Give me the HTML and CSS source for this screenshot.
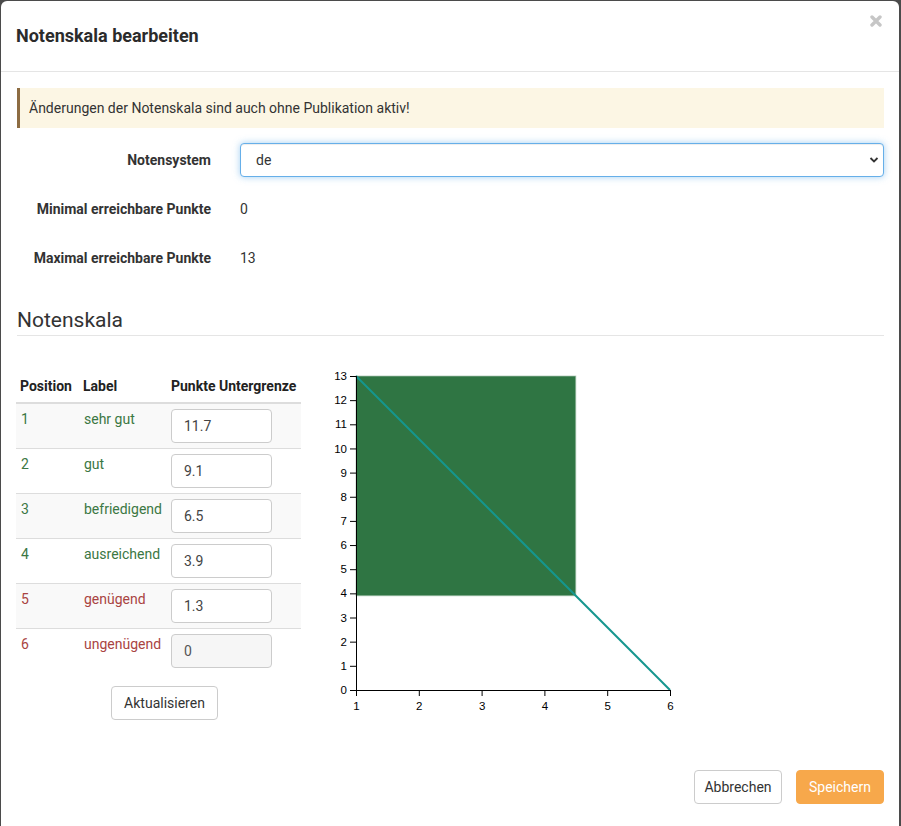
FILE: index.html
```html
<!DOCTYPE html>
<html lang="de">
<head>
<meta charset="utf-8">
<title>Notenskala bearbeiten</title>
<link rel="stylesheet" href="styles.css">
</head>
<body>
<div class="modal">
  <div class="modal-header">
    <h4 class="modal-title">Notenskala bearbeiten</h4>
    <span class="close" aria-label="Schließen">
      <svg width="12" height="12" viewBox="0 0 12 12"><path d="M2 2 L10 10 M10 2 L2 10" stroke="#c6c6c6" stroke-width="3.4" stroke-linecap="round"/></svg>
    </span>
  </div>
  <div class="modal-body">
    <div class="alert">Änderungen der Notenskala sind auch ohne Publikation aktiv!</div>
    <div class="form-row">
      <label class="form-label">Notensystem</label>
      <div class="select-wrap">
        <select class="form-select"><option>de</option></select>
        <svg class="chevron" width="10" height="8" viewBox="0 0 10 8"><path d="M1.5 2 L5 5.5 L8.5 2" fill="none" stroke="#333" stroke-width="1.8"/></svg>
      </div>
    </div>
    <div class="form-row">
      <label class="form-label">Minimal erreichbare Punkte</label>
      <div class="static">0</div>
    </div>
    <div class="form-row">
      <label class="form-label">Maximal erreichbare Punkte</label>
      <div class="static">13</div>
    </div>
    <h3 class="section-title">Notenskala</h3>
    <div class="scale">
      <div class="scale-left">
        <table class="grades">
          <thead>
            <tr><th class="c-pos">Position</th><th class="c-label">Label</th><th class="c-pts">Punkte Untergrenze</th></tr>
          </thead>
          <tbody>
            <tr class="pass"><td>1</td><td>sehr gut</td><td><input class="num" value="11.7"></td></tr>
            <tr class="pass"><td>2</td><td>gut</td><td><input class="num" value="9.1"></td></tr>
            <tr class="pass"><td>3</td><td>befriedigend</td><td><input class="num" value="6.5"></td></tr>
            <tr class="pass"><td>4</td><td>ausreichend</td><td><input class="num" value="3.9"></td></tr>
            <tr class="fail"><td>5</td><td>genügend</td><td><input class="num" value="1.3"></td></tr>
            <tr class="fail"><td>6</td><td>ungenügend</td><td><input class="num readonly" value="0" readonly></td></tr>
          </tbody>
        </table>
        <div class="update-row"><button class="btn">Aktualisieren</button></div>
      </div>
      <svg class="chart" width="380" height="350" viewBox="0 0 380 350">
        <rect x="36" y="8" width="219.8" height="219.8" fill="#2f7543" stroke="#a9c5b0" stroke-width="1" stroke-opacity="0.7"/>
        <polyline points="36,8 255.8,227.8 350,322" fill="none" stroke="#15968f" stroke-width="2"/>
        <g stroke="#000" stroke-width="1" fill="none">
          <path d="M36.5 8 V322.5 H350.5"/>
          <path d="M30 8.5 H36 M30 32.65 H36 M30 56.8 H36 M30 80.95 H36 M30 105.1 H36 M30 129.25 H36 M30 153.4 H36 M30 177.55 H36 M30 201.7 H36 M30 225.85 H36 M30 250 H36 M30 274.15 H36 M30 298.3 H36 M30 322.5 H36"/>
          <path d="M36.5 322 V328 M99.3 322 V328 M162.1 322 V328 M224.9 322 V328 M287.7 322 V328 M350.5 322 V328"/>
        </g>
        <g class="ylab" text-anchor="end">
          <text x="27" y="12">13</text>
          <text x="27" y="36.2">12</text>
          <text x="27" y="60.3">11</text>
          <text x="27" y="84.5">10</text>
          <text x="27" y="108.6">9</text>
          <text x="27" y="132.8">8</text>
          <text x="27" y="156.9">7</text>
          <text x="27" y="181.1">6</text>
          <text x="27" y="205.2">5</text>
          <text x="27" y="229.4">4</text>
          <text x="27" y="253.5">3</text>
          <text x="27" y="277.7">2</text>
          <text x="27" y="301.8">1</text>
          <text x="27" y="326">0</text>
        </g>
        <g class="xlab" text-anchor="middle">
          <text x="36.5" y="342">1</text>
          <text x="99.3" y="342">2</text>
          <text x="162.1" y="342">3</text>
          <text x="224.9" y="342">4</text>
          <text x="287.7" y="342">5</text>
          <text x="350.5" y="342">6</text>
        </g>
      </svg>
    </div>
  </div>
  <div class="modal-footer">
    <button class="btn btn-default">Abbrechen</button>
    <button class="btn btn-primary">Speichern</button>
  </div>
</div>
</body>
</html>
```
FILE: styles.css
```css
* { box-sizing: border-box; }
html, body { margin: 0; padding: 0; }
body {
  background: #4b4b4b;
  font-family: Roboto, "Liberation Sans", Arial, sans-serif;
  font-size: 14px;
  color: #333;
  height: 826px;
  overflow: hidden;
}
.modal {
  margin: 1px 0 0 1px;
  width: 898px;
  height: 830px;
  background: #fff;
  border-radius: 6px;
  position: relative;
}
.modal-header {
  height: 71px;
  padding: 0 16px 2px 15px;
  border-bottom: 1px solid #e5e5e5;
  display: flex;
  align-items: center;
}
.modal-title {
  margin: 0;
  font-size: 18px;
  font-weight: 700;
  color: #2b2b2b;
}
.close {
  position: absolute;
  right: 17px;
  top: 14px;
  width: 12px;
  height: 12px;
  display: block;
}
.close svg { display: block; }
.modal-body {
  padding: 16px 15px 16px 15px;
}
.alert {
  background: #fcf6e4;
  border-left: 3px solid #8d6c42;
  padding: 10px 9px;
  line-height: 20px;
  font-size: 14px;
  color: #333;
  margin-bottom: 15px;
  margin-left: 1px;
}
.form-row {
  display: grid;
  grid-template-columns: 210px 1fr;
  column-gap: 14px;
  margin-bottom: 15px;
  align-items: start;
}
.form-label {
  text-align: right;
  font-weight: 700;
  line-height: 20px;
  padding: 7px 15px 7px 0;
  color: #333;
}
.select-wrap { position: relative; }
.form-select {
  width: 100%;
  height: 34px;
  -webkit-appearance: none;
  appearance: none;
  border: 1px solid #66afe9;
  border-radius: 4px;
  box-shadow: inset 0 1px 1px rgba(0,0,0,.075), 0 0 7px rgba(102,175,233,.6);
  background: #fff;
  font-family: inherit;
  font-size: 14px;
  color: #333;
  padding: 0 15px;
  outline: none;
}
.chevron {
  position: absolute;
  right: 5px;
  top: 13px;
  pointer-events: none;
}
.static {
  line-height: 20px;
  padding: 7px 0;
  color: #333;
}
.section-title {
  margin: 32px 0 0 1px;
  font-size: 21px;
  font-weight: 400;
  color: #333;
  line-height: 26px;
  padding-bottom: 2px;
  border-bottom: 1px solid #e5e5e5;
}
.scale {
  display: flex;
  align-items: flex-start;
  margin-top: 32px;
}
.scale-left { width: 285px; }
.grades {
  width: 285px;
  border-collapse: collapse;
  font-size: 14px;
}
.grades th {
  font-weight: 700;
  font-size: 14px;
  text-align: left;
  padding: 8px 4px 6px 4px;
  line-height: 20px;
  border-bottom: 2px solid #ddd;
  color: #222;
  white-space: nowrap;
}
.grades .c-pos { width: 63px; }
.grades .c-label { width: 88px; }
.grades th.c-pts { padding-left: 4px; }
.grades td {
  padding: 5px 4px;
  line-height: 20px;
  vertical-align: top;
  border-top: 1px solid #ddd;
}
.grades tbody tr:first-child td { border-top: 0; }
.grades tbody tr:nth-child(odd) { background: #f9f9f9; }
.grades td:first-child { padding-left: 5px; }
.grades td:nth-child(2) { padding-left: 5px; }
.grades td:nth-child(3) { padding-left: 4px; padding-bottom: 5px; }
.pass td { color: #3b7743; }
.fail td { color: #a94442; }
.num {
  width: 101px;
  height: 34px;
  border: 1px solid #ccc;
  border-radius: 4px;
  background: #fff;
  font-family: inherit;
  font-size: 14px;
  color: #444;
  padding: 0 12px;
  display: block;
}
.num.readonly { background: #f6f6f6; color: #555; }
.update-row {
  display: flex;
  justify-content: center;
  padding-left: 12px;
  margin-top: 13px;
}
.btn {
  font-family: inherit;
  font-size: 14px;
  color: #333;
  background: #fff;
  border: 1px solid #ccc;
  border-radius: 4px;
  height: 34px;
  padding: 0 12px;
  line-height: 32px;
}
.chart {
  display: block;
  margin-left: 19px;
}
.chart text {
  font-family: "Liberation Sans", Arial, sans-serif;
  font-size: 11.5px;
  fill: #000;
}
.modal-footer {
  display: flex;
  justify-content: flex-end;
  gap: 14px;
  padding: 34px 15px 21px 15px;
}
.btn-default {
  width: 88px;
  padding: 0;
}
.btn-primary {
  background: #f7a84b;
  border-color: #f7a84b;
  color: #fff;
  width: 88px;
  padding: 0;
}
```
